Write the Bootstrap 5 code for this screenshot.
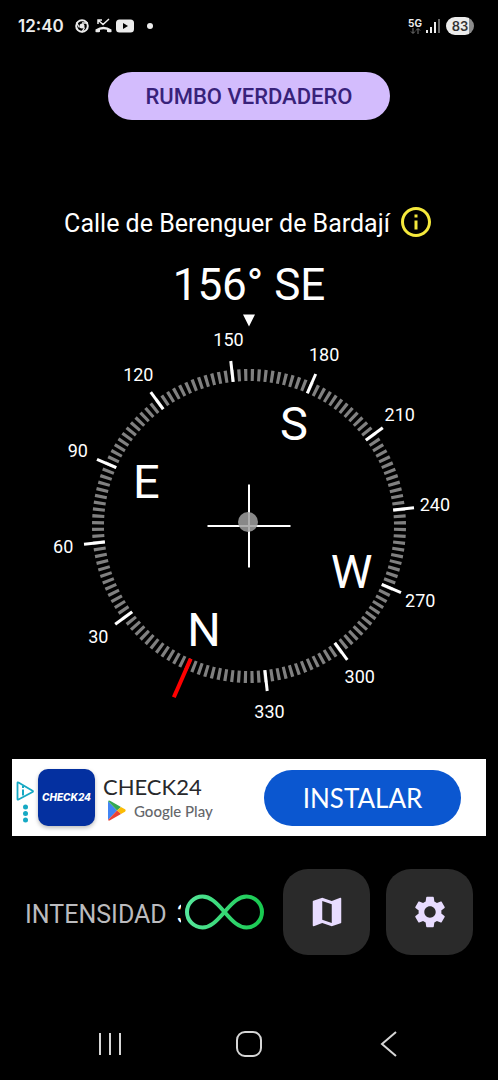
<!DOCTYPE html>
<html lang="es">
<head>
<meta charset="utf-8">
<meta name="viewport" content="width=device-width, initial-scale=1">
<title>Brújula</title>
<link href="https://cdn.jsdelivr.net/npm/bootstrap@5.3.0/dist/css/bootstrap.min.css" rel="stylesheet">
<style>
  body { background: #000; color: #fff; font-family: Roboto, sans-serif; }
  svg { display: block; flex-shrink: 0; }
  .status-bar { height: 52px; padding: 0 24px 0 18px; color: #ececec; }
  .clock { font: 600 17px/24px Inter, sans-serif; }
  .net { font: 700 10px/10px Inter, sans-serif; }
  .battery { width: 28px; height: 18px; border-radius: 9px; background: linear-gradient(90deg, #ececec 83%, #8b8b8b 83%); color: #333; font: 600 13px/18px Inter, sans-serif; }
  .btn-north { width: 282px; height: 48px; margin-top: 20px; padding: 8px 0 6px; background: #d3bcfd; color: #38227a; font-size: 22px; font-weight: 500; line-height: 24px; }
  .btn-north:hover { background: #c9aefb; color: #38227a; }
  .place { margin-top: 84px; height: 36px; font-size: 25px; line-height: 36px; }
  .place-name { padding-top: 3px; }
  .heading { margin-top: 20px; font-size: 44px; line-height: 50px; font-weight: 400; }
  .dial { width: 100%; height: auto; font-family: Roboto, sans-serif; fill: #fff; }
  .dial text { text-anchor: middle; }
  .degree { font-size: 18px; }
  .cardinal { font-size: 47px; }
  .ad { margin: 29px 12px 0; height: 77px; background: #fff; color: #28292c; font-family: Lato, sans-serif; padding: 0 25px 0 4px; }
  .ad-logo { width: 57px; height: 57px; border-radius: 10px; background: #0430a0; color: #fff; box-shadow: 0 2px 4px #0004; font: italic 800 10px/57px Inter, sans-serif; }
  .ad-name { font-size: 22px; line-height: 26px; }
  .ad-store { font-size: 15px; line-height: 20px; color: #65676b; font-weight: 500; }
  .btn-install { width: 197px; height: 56px; background: #0b57d0; color: #fff; font: 400 26px/28px Lato, sans-serif; }
  .btn-install:hover { background: #0a4cb6; color: #fff; }
  .tools { margin-top: 33px; padding: 0 25px; height: 86px; }
  .field-label { padding-top: 6px; font-size: 25px; line-height: 30px; color: #bbbbbe; }
  .field-value { padding-top: 6px; width: 4px; margin-left: 10px; font-size: 25px; line-height: 30px; }
  .btn-tool { width: 87px; height: 86px; border-radius: 25px; background: #2a2a2a; color: #e8dcff; }
  .btn-tool:hover { background: #363636; color: #e8dcff; }
  .nav-keys { height: 72px; padding: 0 40px; }
  .nav-keys .btn { color: #d6d6d6; }
</style>
</head>
<body>
<div class="d-flex flex-column min-vh-100">
  <header class="status-bar d-flex align-items-center">
    <span class="clock">12:40</span>
    <svg class="ms-2" width="84" height="18" viewBox="0 0 84 18" aria-hidden="true">
      <g fill="none" stroke="#ececec">
        <circle cx="10" cy="9" r="5.8" stroke-width="2"/>
        <path d="M10 6h6M7.4 10.5 4.4 5.4M12.6 10.5 9.8 15.4" stroke-width="1.3"/>
        <path d="m26 3 5 4.500 6-5.500M26 7V3h4" stroke-width="1.500"/>
      </g>
      <circle cx="10" cy="9" r="2.5" fill="#ececec"/>
      <path d="M23.500 15v-2.500q8-5.500 16 0v2.500q-2.500.8-4.500-.3v-2q-3.500-1-7 0v2q-2 1.100-4.500.3z" fill="#ececec"/>
      <rect x="44" y="2.500" width="18" height="13" rx="3.500" fill="#ececec"/>
      <path d="m51 6 5 3-5 3z" fill="#000"/>
      <circle cx="78" cy="9" r="3" fill="#ececec"/>
    </svg>
    <div class="ms-auto d-flex align-items-center">
      <div>
        <div class="net">5G</div>
        <svg class="mx-auto" width="11" height="7" viewBox="0 0 11 7" fill="none" stroke="#777" aria-hidden="true"><path d="M3 0v5M1 3.500l2 2 2-2M8 6V1M6 2.500l2-2 2 2"/></svg>
      </div>
      <svg class="ms-1" width="16" height="16" viewBox="0 0 16 16" stroke-width="2" stroke="#ececec" aria-hidden="true"><path d="M1 15v-3M5 15v-6M9 15V4"/><path d="M13 15V1" stroke="#666"/></svg>
      <div class="battery ms-1 text-center">83</div>
    </div>
  </header>

  <main class="d-flex flex-column">
    <button type="button" class="btn btn-north rounded-pill border-0 align-self-center">RUMBO VERDADERO</button>

    <div class="place d-flex justify-content-center align-items-center">
      <span class="place-name">Calle de Berenguer de Bardají</span>
      <button type="button" class="btn border-0 p-0 ms-2" aria-label="Información">
        <svg width="36" height="36" viewBox="0 0 24 24" fill="#f5e93c"><path d="M11 7h2v2h-2zm0 4h2v6h-2zm1-9C6.480 2 2 6.480 2 12s4.480 10 10 10 10-4.480 10-10S17.520 2 12 2zm0 18c-4.410 0-8-3.590-8-8s3.590-8 8-8 8 3.590 8 8-3.590 8-8 8z"/></svg>
      </button>
    </div>

    <h1 class="heading text-center mb-0">156° SE</h1>

    <svg class="dial" id="dial" viewBox="-249 -216 498 420" role="img" aria-label="Brújula">
      <path d="M-6-211.500H6L0-199.500z"/>
      <circle r="151" fill="none" stroke="#808080" stroke-width="12" id="minor"/>
      <g id="scale"></g>
      <path d="M-41.500 0h83M0-41.500v83" stroke="#fff" stroke-width="2"/>
      <circle cx="-1" cy="-4" r="10" fill="#a0a0a0" fill-opacity=".85"/>
    </svg>

    <section class="ad d-flex align-items-center" aria-label="Anuncio">
      <svg width="18" height="56" viewBox="0 0 18 56" aria-hidden="true">
        <path d="M1.500 13v16q0 1 1 .5L16.500 22q1-.6 0-1.200L2.500 12.500q-1-.5-1 .5z" fill="none" stroke="#16a9c4" stroke-width="1.800"/>
        <path d="M7 16v2M7 19.500v6" stroke="#16a9c4" stroke-width="2"/>
        <g fill="#16a9c4"><circle cx="9.500" cy="37" r="2.500"/><circle cx="9.500" cy="43.500" r="2.500"/><circle cx="9.500" cy="50" r="2.500"/></g>
      </svg>
      <div class="ad-logo text-center flex-shrink-0 ms-1">CHECK24</div>
      <div class="ms-2">
        <div class="ad-name">CHECK24</div>
        <div class="ad-store d-flex align-items-center gap-2">
          <svg class="ms-1" width="19" height="21" viewBox="0 0 19 21" aria-hidden="true">
            <path d="M1 1v19l9-9.500z" fill="#4285f4"/><path d="M1 1q1-1 2.500 0L14 7l-4 3.500z" fill="#34a853"/><path d="M14 7l4 2.300q1.300 1.200 0 2.400L14 14l-4-3.500z" fill="#fbbc04"/><path d="M1 20q1 1 2.500 0L14 14l-4-3.500z" fill="#ea4335"/>
          </svg>
          <a href="#" class="text-reset text-decoration-none">Google Play</a>
        </div>
      </div>
      <button type="button" class="btn btn-install rounded-pill border-0 ms-auto">INSTALAR</button>
    </section>

    <section class="tools d-flex align-items-center">
      <span class="field-label">INTENSIDAD</span>
      <span class="field-value overflow-hidden">3</span>
      <svg class="ms-1" width="79" height="36" viewBox="0 0 79 36" aria-hidden="true">
        <defs><linearGradient id="loop"><stop offset="0" stop-color="#55e69a"/><stop offset="1" stop-color="#18c950"/></linearGradient></defs>
        <path d="M39.500 18C31 8 25 2.500 17.500 2.500a15.500 15.500 0 0 0 0 31C25 33.500 31 28 39.500 18S54 2.500 61.500 2.500a15.500 15.500 0 0 1 0 31C54 33.500 48 28 39.500 18z" fill="none" stroke="url(#loop)" stroke-width="4"/>
      </svg>
      <div class="d-flex gap-3 ms-auto">
        <button type="button" class="btn btn-tool border-0 p-0 d-flex align-items-center justify-content-center" aria-label="Mapa">
          <svg width="38" height="38" viewBox="0 0 24 24" fill="currentColor"><path d="M20.500 3l-.16.030L15 5.100 9 3 3.360 4.900c-.21.070-.36.250-.36.480V20.500c0 .280.220.5.5.5l.16-.030L9 18.900l6 2.100 5.640-1.900c.21-.070.360-.250.360-.480V3.500c0-.280-.220-.5-.5-.5zM15 19l-6-2.110V5l6 2.110V19z"/></svg>
        </button>
        <button type="button" class="btn btn-tool border-0 p-0 d-flex align-items-center justify-content-center" aria-label="Ajustes">
          <svg width="38" height="38" viewBox="0 0 24 24" fill="currentColor"><path d="M19.140 12.940c.04-.3.060-.61.060-.94 0-.32-.02-.64-.07-.94l2.030-1.580c.18-.14.230-.41.120-.61l-1.920-3.320c-.12-.22-.37-.29-.59-.22l-2.390.96c-.5-.38-1.030-.7-1.620-.94l-.36-2.540c-.04-.24-.24-.41-.48-.41h-3.840c-.24 0-.43.170-.47.410l-.36 2.540c-.59.240-1.130.57-1.620.94l-2.390-.96c-.22-.08-.47 0-.59.220L2.740 8.870c-.12.210-.08.470.12.610l2.030 1.580c-.05.300-.09.630-.09.940s.02.640.07.940l-2.030 1.580c-.18.140-.23.410-.12.610l1.920 3.320c.12.220.37.290.59.220l2.390-.96c.5.380 1.030.7 1.620.94l.36 2.540c.05.240.24.410.48.410h3.840c.24 0 .44-.17.470-.41l.36-2.540c.59-.24 1.130-.56 1.620-.94l2.390.96c.22.080.47 0 .59-.22l1.920-3.320c.12-.22.070-.47-.12-.61l-2.010-1.580zM12 15.600c-1.980 0-3.600-1.620-3.600-3.600s1.620-3.600 3.600-3.600 3.600 1.620 3.600 3.600-1.620 3.600-3.600 3.600z"/></svg>
        </button>
      </div>
    </section>
  </main>

  <nav class="nav-keys row g-0 mt-auto align-items-center" aria-label="Sistema">
    <button type="button" class="btn col border-0 p-0" aria-label="Recientes"><svg class="mx-auto" width="26" height="26" viewBox="0 0 26 26" stroke="currentColor" stroke-width="2"><path d="M3 2v22M13 2v22M23 2v22"/></svg></button>
    <button type="button" class="btn col border-0 p-0" aria-label="Inicio"><svg class="mx-auto" width="28" height="28" viewBox="0 0 28 28" fill="none" stroke="currentColor" stroke-width="2"><rect x="2" y="2" width="24" height="24" rx="8"/></svg></button>
    <button type="button" class="btn col border-0 p-0" aria-label="Atrás"><svg class="mx-auto" width="26" height="28" viewBox="0 0 26 28" fill="none" stroke="currentColor" stroke-width="2"><path d="M21 2 7 14l14 12"/></svg></button>
  </nav>
</div>
<script src="https://cdn.jsdelivr.net/npm/bootstrap@5.3.0/dist/js/bootstrap.bundle.min.js"></script>
<script>
  // The dial turns against the heading; labels stay upright.
  const heading = 156.3;
  const scale = document.getElementById('scale');
  const cardinals = { 0: 'N', 90: 'E', 180: 'S', 270: 'W' };
  const step = 2.5, tick = 1.2, arc = 2 * Math.PI * 151 / 360;

  const minor = document.getElementById('minor');
  minor.setAttribute('stroke-dasharray', `${arc * tick} ${arc * (step - tick)}`);
  minor.setAttribute('transform', `rotate(${-heading - 90 - tick / 2})`);

  const at = (deg, r) => {
    const a = (deg - heading) * Math.PI / 180;
    return [Math.sin(a) * r, -Math.cos(a) * r];
  };
  let marks = '';
  const label = (deg, r, cls, text, drop) => {
    const [x, y] = at(deg, r);
    marks += `<text class="${cls}" x="${x}" y="${y + drop}">${text}</text>`;
  };
  for (let d = 0; d < 360; d += 30) {
    const [x1, y1] = at(d, 145), [x2, y2] = at(d, d ? 166 : 187);
    marks += `<path d="M${x1} ${y1}L${x2} ${y2}" stroke="${d ? '#fff' : '#f00'}" stroke-width="${d ? 3 : 4}"/>`;
    if (d) label(d, 187, 'degree', d, 6);
    if (d in cardinals) label(d, 112, 'cardinal', cardinals[d], 17);
  }
  scale.innerHTML = marks;
</script>
</body>
</html>
